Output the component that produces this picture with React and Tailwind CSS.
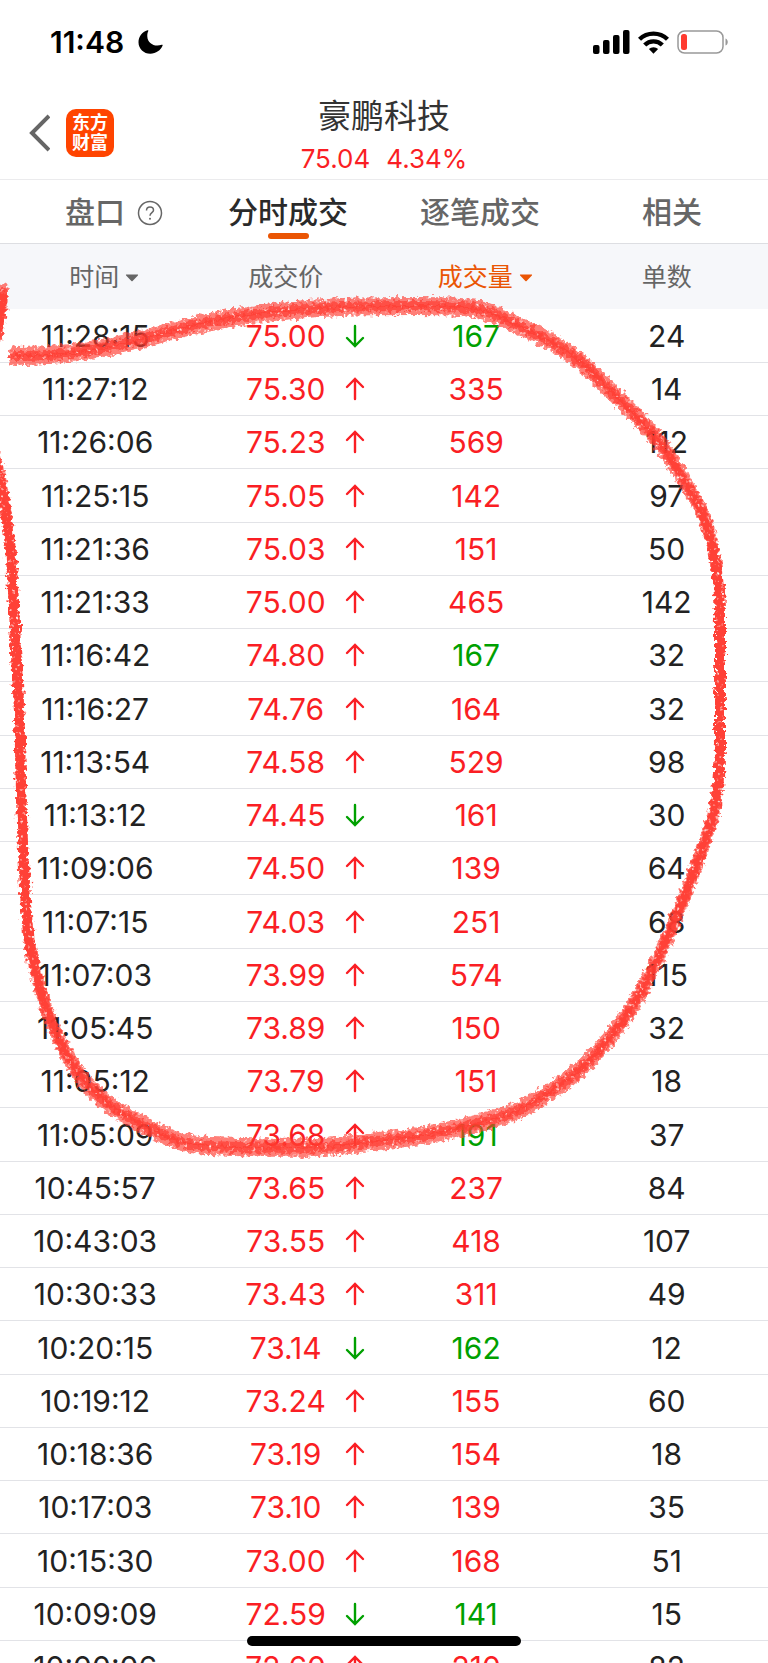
import React, { useState } from 'react';

const TABS = ['盘口', '分时成交', '逐笔成交', '相关'];

// time, price, price direction, volume, volume side, order count
const TRADES = [
  ['11:28:15', '75.00', 'down', 167, 'sell', 24],
  ['11:27:12', '75.30', 'up', 335, 'buy', 14],
  ['11:26:06', '75.23', 'up', 569, 'buy', 112],
  ['11:25:15', '75.05', 'up', 142, 'buy', 97],
  ['11:21:36', '75.03', 'up', 151, 'buy', 50],
  ['11:21:33', '75.00', 'up', 465, 'buy', 142],
  ['11:16:42', '74.80', 'up', 167, 'sell', 32],
  ['11:16:27', '74.76', 'up', 164, 'buy', 32],
  ['11:13:54', '74.58', 'up', 529, 'buy', 98],
  ['11:13:12', '74.45', 'down', 161, 'buy', 30],
  ['11:09:06', '74.50', 'up', 139, 'buy', 64],
  ['11:07:15', '74.03', 'up', 251, 'buy', 68],
  ['11:07:03', '73.99', 'up', 574, 'buy', 115],
  ['11:05:45', '73.89', 'up', 150, 'buy', 32],
  ['11:05:12', '73.79', 'up', 151, 'buy', 18],
  ['11:05:09', '73.68', 'up', 191, 'sell', 37],
  ['10:45:57', '73.65', 'up', 237, 'buy', 84],
  ['10:43:03', '73.55', 'up', 418, 'buy', 107],
  ['10:30:33', '73.43', 'up', 311, 'buy', 49],
  ['10:20:15', '73.14', 'down', 162, 'sell', 12],
  ['10:19:12', '73.24', 'up', 155, 'buy', 60],
  ['10:18:36', '73.19', 'up', 154, 'buy', 18],
  ['10:17:03', '73.10', 'up', 139, 'buy', 35],
  ['10:15:30', '73.00', 'up', 168, 'buy', 51],
  ['10:09:09', '72.59', 'down', 141, 'sell', 15],
  ['10:00:06', '72.60', 'up', 210, 'buy', 82],
];

// Centre line of the crayon loop
const LOOP = [
  [14, 356], [40, 356], [83, 352], [133, 342], [200, 323], [267, 312], [333, 307], [384, 306],
  [450, 306], [484, 309], [517, 325], [551, 341], [580, 360], [607, 387], [633, 413], [657, 438],
  [680, 473], [700, 507], [710, 533], [717, 570], [720, 603], [720, 650], [720, 700], [720, 774],
  [714, 815], [701, 853], [687, 890], [674, 923], [657, 960], [641, 993], [617, 1030], [584, 1067],
  [551, 1092], [517, 1112], [484, 1122], [451, 1130], [417, 1137], [367, 1142], [333, 1147],
  [283, 1148], [233, 1147], [187, 1145], [157, 1132], [127, 1117], [100, 1098], [77, 1073],
  [57, 1037], [43, 1000], [33, 963], [27, 927], [25, 883], [23, 850], [21, 790], [19, 700],
  [16, 653], [13, 583], [9, 530], [3, 493], [-4, 460],
];

function smoothPath(pts) {
  let d = `M${pts[0][0]} ${pts[0][1]}`;
  for (let i = 1; i < pts.length - 1; i++) {
    const [x, y] = pts[i];
    const [nx, ny] = pts[i + 1];
    d += ` Q${x} ${y} ${(x + nx) / 2} ${(y + ny) / 2}`;
  }
  const last = pts[pts.length - 1];
  return `${d} L${last[0]} ${last[1]}`;
}

function Scribble() {
  const d = `${smoothPath(LOOP)} M3 293 L-3 334`;
  return (
    <svg viewBox="0 0 768 1663" className="absolute top-0 left-0 w-full pointer-events-none" aria-hidden="true">
      <defs>
        <filter id="crayon" filterUnits="userSpaceOnUse" x="-20" y="260" width="800" height="920" colorInterpolationFilters="sRGB">
          <feTurbulence type="fractalNoise" baseFrequency="0.25" numOctaves="3" seed="4" result="noise" />
          <feDisplacementMap in="SourceGraphic" in2="noise" scale="9" xChannelSelector="R" yChannelSelector="G" result="rough" />
          <feColorMatrix in="noise" type="matrix" values="0 0 0 0 0  0 0 0 0 0  0 0 0 0 0  0 0 4 0 -0.4" result="grain" />
          <feComposite in="rough" in2="grain" operator="in" />
        </filter>
      </defs>
      {/* stacked strokes make a nib that is taller than it is wide */}
      <g filter="url(#crayon)" fill="none" stroke="#ff3b30" strokeWidth="10" strokeLinecap="round" strokeLinejoin="round">
        <path d={d} transform="translate(0 -4)" strokeOpacity="0.65" />
        <path d={d} transform="translate(0 4)" strokeOpacity="0.65" />
        <path d={d} strokeOpacity="0.7" />
      </g>
    </svg>
  );
}

function StatusBar() {
  return (
    <div className="flex h-[84px] items-center justify-between pl-[50px] pr-[39px] text-black">
      <div className="flex items-center gap-[14px]">
        <span className="text-[30px] leading-none font-semibold">11:48</span>
        <svg width="25" height="24" viewBox="0 0 25 24" fill="currentColor" aria-hidden="true">
          <path d="M9.5 0.3C4 2 0.5 6.7 0.5 12.2C0.5 18.8 5.8 23.7 12.3 23.7C18 23.7 22.8 20.3 24.6 15.6C24.9 14.9 24.4 14.5 23.7 14.8C16.5 17.3 9.6 13.3 9.3 6.5C9.2 4.3 9.6 2.6 10.2 1.2C10.5 0.5 10.2 0.1 9.5 0.3Z" />
        </svg>
      </div>
      <div className="flex items-center gap-2">
        <svg width="37" height="24" viewBox="0 0 37 24" fill="currentColor" aria-hidden="true">
          <rect x="0" y="15" width="6.5" height="9" rx="2" />
          <rect x="10" y="10" width="6.5" height="14" rx="2" />
          <rect x="20" y="5" width="6.5" height="19" rx="2" />
          <rect x="30" y="0" width="6.5" height="24" rx="2" />
        </svg>
        <svg width="31" height="23" viewBox="0 0 31 23" fill="none" stroke="currentColor" aria-hidden="true">
          <path d="M1.5 8.3a20 20 0 0 1 28 0" strokeWidth="4.4" />
          <path d="M6.7 14a12.5 12.5 0 0 1 17.6 0" strokeWidth="4.4" />
          <path d="M15.5 22.8l-4.6-4.7a6.6 6.6 0 0 1 9.2 0z" fill="currentColor" stroke="none" />
        </svg>
        <svg width="52" height="24" viewBox="0 0 52 24" aria-hidden="true">
          <rect x="1" y="1" width="45" height="22" rx="6.5" fill="none" stroke="#999" strokeWidth="1.5" />
          <path d="M48.5 8.5c3 1 3 6 0 7z" fill="#999" />
          <rect x="4" y="4" width="6" height="16" rx="2.5" fill="#ff3b30" />
        </svg>
      </div>
    </div>
  );
}

function Header() {
  return (
    <header className="grid h-24 grid-cols-[1fr_auto_1fr] border-b border-[#ebebed]">
      <div className="flex items-center gap-4 pt-[2px] pl-[29px]">
        <button type="button" aria-label="返回" className="text-[#666]">
          <svg width="21" height="38" viewBox="0 0 21 38" fill="none" stroke="currentColor" strokeWidth="4">
            <path d="M20 2L3 19L20 36" />
          </svg>
        </button>
        <div className="flex h-12 w-12 items-center justify-center rounded-[10px] bg-[#ff4400] text-center text-[18px] leading-[20px] font-bold text-white">
          东方<br />财富
        </div>
      </div>
      <div className="flex flex-col items-center pt-2">
        <h1 className="text-[33px] leading-[48px] font-normal text-[#333]">豪鹏科技</h1>
        <p className="flex gap-4 text-[26px] leading-[38px] text-[#fa1e24]">
          <span>75.04</span>
          <span>4.34%</span>
        </p>
      </div>
    </header>
  );
}

function Caret() {
  return (
    <svg width="14" height="8" viewBox="0 0 14 8" fill="currentColor" aria-hidden="true">
      <path d="M1.5 0.5h11c.6 0 .8.5.4.9L7.6 6.9c-.4.4-.8.4-1.2 0L1.1 1.4C.7 1 .9.5 1.5.5z" />
    </svg>
  );
}

function Arrow({ dir }) {
  return (
    <svg
      width="20"
      height="24"
      viewBox="0 0 20 24"
      fill="none"
      stroke="currentColor"
      strokeWidth="2.4"
      strokeLinecap="round"
      className={dir === 'up' ? 'text-[#fa1e24]' : 'rotate-180 text-[#00a000]'}
      role="img"
      aria-label={dir}
    >
      <path d="M10 22V2.5M2 10L10 2L18 10" />
    </svg>
  );
}

export default function App() {
  const [tab, setTab] = useState('分时成交');

  return (
    <div className="relative h-screen overflow-hidden bg-white font-['Inter','Noto_Sans_CJK_SC',sans-serif] text-[#222]">
      <StatusBar />
      <Header />

      <nav className="grid h-16 grid-cols-4 border-b border-[#dddee2]">
        {TABS.map(name => (
          <button
            key={name}
            type="button"
            onClick={() => setTab(name)}
            className={`relative flex items-center justify-center gap-3 pt-[2px] text-[30px] font-medium ${
              name === tab ? 'text-[#2a2a2a]' : 'text-[#666]'
            } ${name === '盘口' ? 'pl-9' : ''}`}
          >
            {name}
            {name === '盘口' && (
              <svg width="26" height="26" viewBox="0 0 26 26" fill="none" stroke="currentColor" strokeWidth="1.5" aria-hidden="true">
                <circle cx="13" cy="13" r="11.5" />
                <path d="M9.5 10.5C9.5 8.3 11 7 13 7C15 7 16.5 8.3 16.5 10.2C16.5 12.6 13 12.8 13 15.8" />
                <circle cx="13" cy="18.8" r="1" fill="currentColor" stroke="none" />
              </svg>
            )}
            {name === tab && <span className="absolute bottom-1 h-[6px] w-[41px] rounded-full bg-[#ea5504]" />}
          </button>
        ))}
      </nav>

      <table className="w-full table-fixed border-collapse">
        <colgroup>
          <col className="w-[24.8%]" />
          <col className="w-[24.8%]" />
          <col className="w-[24.8%]" />
          <col />
        </colgroup>
        <thead>
          <tr className="h-[65px] bg-[#f6f7fa] text-[25px] text-[#666]">
            <th className="p-0 pt-[2px] font-normal">
              <button type="button" className="inline-flex items-center gap-[6px] pl-[18px]">
                时间 <Caret />
              </button>
            </th>
            <th className="p-0 pt-[2px] font-normal">成交价</th>
            <th className="p-0 pt-[2px] font-normal text-[#ea5504]">
              <button type="button" className="inline-flex items-center gap-[6px] pl-[18px]">
                成交量 <Caret />
              </button>
            </th>
            <th className="p-0 pt-[2px] pr-[6px] font-normal">单数</th>
          </tr>
        </thead>
        <tbody className="text-center text-[30px] leading-[40px]">
          {TRADES.map(([time, price, dir, volume, side, orders]) => (
            <tr key={time} className="h-[53px] border-b border-[#e2e3e7] nth-[4n]:h-[54px]">
              <td className="p-0 pt-px">{time}</td>
              <td className="p-0 pt-px text-[#fa1e24]">
                <div className="grid grid-cols-[52px_1fr_52px] items-center justify-items-center">
                  <span className="col-start-2">{price}</span>
                  <Arrow dir={dir} />
                </div>
              </td>
              <td className={side === 'buy' ? 'p-0 pt-px text-[#fa1e24]' : 'p-0 pt-px text-[#00a000]'}>{volume}</td>
              <td className="p-0 pt-px pr-[6px]">{orders}</td>
            </tr>
          ))}
        </tbody>
      </table>

      <Scribble />

      {/* home indicator */}
      <div className="absolute inset-x-0 bottom-[17px] mx-auto h-[10px] w-[274px] rounded-full bg-black" />
    </div>
  );
}
